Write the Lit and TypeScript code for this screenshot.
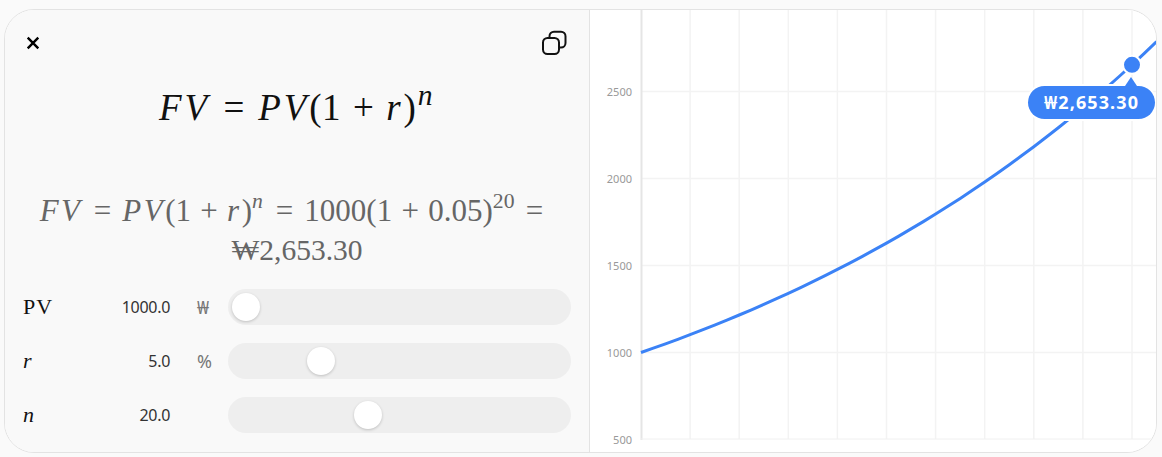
import { LitElement, html, css, svg } from "lit";
import { customElement } from "lit/decorators.js";

const X0 = 641, PX_PER_N = 24.55;
const yOf = (v: number) => 439.5 - (v - 500) * 0.174;
const xOf = (n: number) => X0 + n * PX_PER_N;
const curve = Array.from({ length: 43 }, (_, i) => {
  const n = i / 2;
  return `${xOf(n).toFixed(1)},${yOf(1000 * Math.pow(1.05, n)).toFixed(1)}`;
}).join(" ");
const rows = [
  { label: "PV", math: false, value: "1000.0", unit: "₩", pos: 0 },
  { label: "r", math: true, value: "5.0", unit: "%", pos: 0.244 },
  { label: "n", math: true, value: "20.0", unit: "", pos: 0.397 },
];

@customElement("app-root")
export class AppRoot extends LitElement {
  static styles = css`
    :host { display: block; width: 1162px; height: 457px; box-sizing: border-box; padding: 9px 5px 4px 4px; background: #fafafa; overflow: hidden; }
    .card { display: flex; height: 444px; box-sizing: border-box; border: 1px solid #e3e3e3; border-radius: 30px; overflow: hidden; background: #fff; }
    .left { width: 585px; flex: none; box-sizing: border-box; border-right: 1px solid #e3e3e3; background: #f9f9f9; display: flex; flex-direction: column; padding: 0 18px 0 18px; }
    .top { display: flex; justify-content: space-between; align-items: center; height: 28px; margin: 19px 3.5px 0 -2px; }
    .top svg { display: block; }
    .math { font-family: "Liberation Serif", serif; text-align: center; white-space: nowrap; }
    .big { font-size: 37px; line-height: 44px; letter-spacing: 0.5px; color: #111; margin: 28.5px 0 0 0; }
    .mid { font-size: 31px; line-height: 39px; color: #666; margin: 61px 0 0 0; }
    .amount { font-size: 29.5px; }
    i { font-style: italic; letter-spacing: 0.08em; }
    sup { font-size: 0.7em; line-height: 0; vertical-align: 0.62em; }
    .big sup { font-size: 0.8em; margin-left: 0.05em; vertical-align: 0.5em; }
    .rel { margin: 0 0.36em; }
    .bin { margin: 0 0.3em; }
    .big .rel { margin: 0 0.36em; }
    .big .bin { margin: 0 0.32em; }
    .sliders { display: flex; flex-direction: column; gap: 18px; margin-top: 19px; }
    .row { display: grid; grid-template-columns: 76px 71px 58px 343px; height: 36px; align-items: center; margin-right: -1px; }
    .label { font: 22px "Liberation Serif", serif; color: #111; letter-spacing: 1px; }
    .label.m { font-style: italic; }
    .value { font: 16px "Noto Sans", sans-serif; letter-spacing: -0.3px; color: #333; text-align: right; }
    .unit { font: 18px "Noto Sans", sans-serif; color: #777; padding-left: 27px; }
    .track { position: relative; height: 36px; border-radius: 18px; background: #eeeeee; }
    .thumb { position: absolute; top: 4px; width: 28px; height: 28px; margin-left: -14px; border-radius: 50%; background: #fff; box-shadow: 0 1px 3px rgba(0,0,0,.2); }
    .right { position: relative; flex: 1; min-width: 0; background: #fff; }
    .right svg { display: block; }
    .tick { font: 11px "Noto Sans", sans-serif; fill: #999; text-anchor: end; }
    .tip { position: absolute; left: 438px; top: 76px; width: 127px; height: 33px; box-sizing: border-box; border-radius: 17px; background: #3b82f6; color: #fff; font: 700 18px/33px "Noto Sans", sans-serif; letter-spacing: 1.1px; text-align: center; box-shadow: 0 0 0 2px #fff; }
    .tip::before { content: ""; position: absolute; left: 97px; top: -9px; border: solid transparent; border-width: 0 6.5px 9px; border-bottom-color: #3b82f6; }
  `;

  render() {
    const vx = [1, 2, 3, 4, 5, 6, 7, 8, 9, 10].map((k) => xOf(k * 2));
    const ticks = [500, 1000, 1500, 2000, 2500];
    return html`<div class="card">
      <section class="left">
        <div class="top">
          <svg width="24" height="24" viewBox="0 0 24 24" fill="none" stroke="#000" stroke-width="2.4"><path d="M6.7 6.7 17.3 17.3M17.3 6.7 6.7 17.3"/></svg>
          <svg width="28" height="28" viewBox="0 0 28 28" fill="none" stroke="#111" stroke-width="2"><rect x="3" y="9" width="16" height="16" rx="4.5"/><path d="M9.5 9V7.2A4.5 4.5 0 0 1 14 2.7H21A4.5 4.5 0 0 1 25.5 7.2V14A4.5 4.5 0 0 1 21 18.5H19"/></svg>
        </div>
        <div class="math big"><i>FV</i><span class="rel">=</span><i>PV</i>(1<span class="bin">+</span><i>r</i>)<sup><i>n</i></sup></div>
        <div class="math mid"><i>FV</i><span class="rel">=</span><i>PV</i>(1<span class="bin">+</span><i>r</i>)<sup><i>n</i></sup><span class="rel">=</span>1000(1<span class="bin">+</span>0.05)<sup>20</sup><span class="rel">=</span><br /><span class="amount">₩2,653.30</span></div>
        <div class="sliders">
          ${rows.map((r) => html`<div class="row">
            <span class="label ${r.math ? "m" : ""}">${r.label}</span>
            <span class="value">${r.value}</span>
            <span class="unit">${r.unit}</span>
            <div class="track"><div class="thumb" style="left:${18 + r.pos * 307}px"></div></div>
          </div>`)}
        </div>
      </section>
      <section class="right">
        <svg width="567" height="442" viewBox="590 10 567 442">
          ${vx.map((x) => svg`<line x1=${x} x2=${x} y1="10" y2="439" stroke="#f3f3f3" stroke-width="1.5"/>`)}
          ${ticks.slice(1).map((t) => svg`<line x1="641" x2="1157" y1=${yOf(t)} y2=${yOf(t)} stroke="#f3f3f3" stroke-width="1.5"/>`)}
          <line x1="641.5" x2="641.5" y1="10" y2="440" stroke="#e5e5e5" stroke-width="2"/>
          <line x1="641" x2="1157" y1="439" y2="439" stroke="#f0f0f0" stroke-width="1"/>
          ${ticks.map((t) => svg`<text class="tick" x="632" y=${yOf(t) + 4}>${t}</text>`)}
          <polyline points=${curve} fill="none" stroke="#3b82f6" stroke-width="3"/>
          <circle cx=${xOf(20)} cy=${yOf(2653.3)} r="9" fill="#3b82f6" stroke="#fff" stroke-width="2"/>
        </svg>
        <div class="tip">₩2,653.30</div>
      </section>
    </div>`;
  }
}
